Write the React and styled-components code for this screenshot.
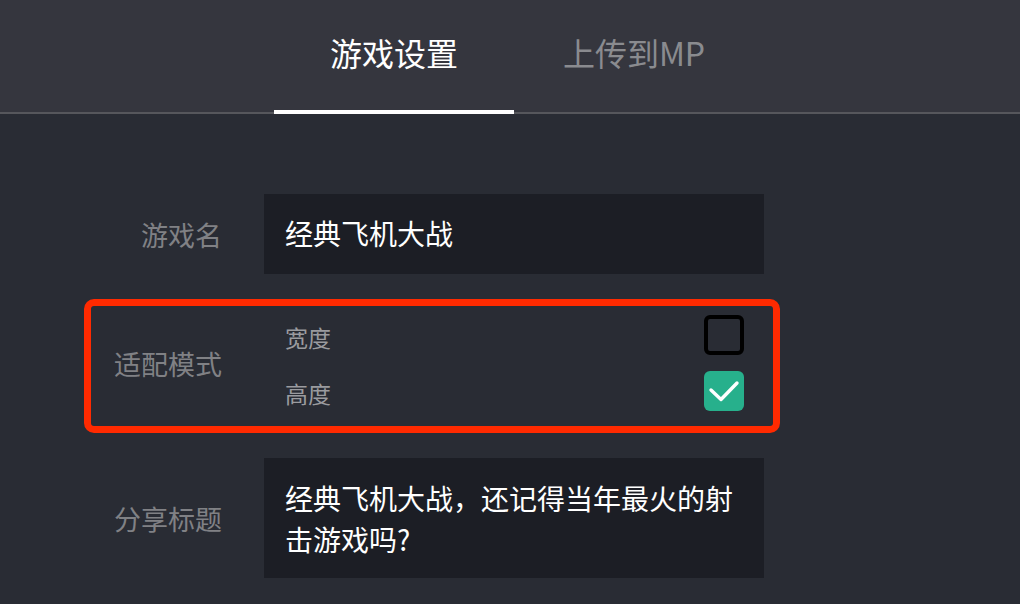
import React, { useState } from "react";
import styled, { createGlobalStyle } from "styled-components";

const GlobalStyle = createGlobalStyle`
  html, body {
    margin: 0;
    padding: 0;
    background: #292c34;
  }
  body {
    font-family: "Noto Sans CJK SC", "Noto Sans", sans-serif;
  }
`;

const Page = styled.div`
  width: 1020px;
  height: 604px;
  overflow: hidden;
  background: #292c34;
`;

const TabBar = styled.div`
  height: 112px;
  display: flex;
  padding-left: 274px;
  background: #35363e;
  border-bottom: 2px solid #56575c;
`;

const Tab = styled.div`
  box-sizing: border-box;
  width: 240px;
  height: 114px;
  padding-bottom: 6px;
  margin-bottom: -2px;
  display: flex;
  align-items: center;
  justify-content: center;
  font-size: 32px;
  color: ${(p) => (p.active ? "#ffffff" : "#8a8b8f")};
  border-bottom: 4px solid ${(p) => (p.active ? "#ffffff" : "transparent")};
  cursor: pointer;
`;

const Form = styled.div`
  display: flex;
  flex-direction: column;
  gap: 18px;
  padding: 73px 0 0 84px;
`;

const Row = styled.div`
  width: 682px;
  display: grid;
  grid-template-columns: 131px 500px;
  column-gap: 42px;
  align-items: center;
  border: 7px solid ${(p) => (p.highlight ? "#ff2a00" : "transparent")};
  border-radius: 10px;
  padding: ${(p) => (p.highlight ? "9px 0 15px" : "0")};
`;

const Label = styled.div`
  text-align: right;
  font-size: 27px;
  color: #808185;
  white-space: nowrap;
`;

const Field = styled.div`
  box-sizing: border-box;
  background: #1c1e25;
  color: #ffffff;
  font-size: 28px;
  line-height: 41px;
  padding: ${(p) => (p.multiline ? "20px 21px 18px" : "19px 21px 20px")};
  min-height: ${(p) => (p.multiline ? "120px" : "80px")};
`;

const Options = styled.div`
  display: flex;
  flex-direction: column;
  gap: 16px;
  padding: 0 20px 0 21px;
`;

const Option = styled.label`
  display: flex;
  align-items: center;
  justify-content: space-between;
  height: 40px;
  font-size: 23px;
  color: #9a9b9f;
  cursor: pointer;
  span {
    padding-top: 3px;
  }
`;

const Box = styled.div`
  box-sizing: border-box;
  width: 40px;
  height: 40px;
  border-radius: 6px;
  border: ${(p) => (p.checked ? "none" : "4px solid #000000")};
  background: ${(p) => (p.checked ? "#27b08c" : "transparent")};
  display: flex;
  align-items: center;
  justify-content: center;
`;

const Check = () => (
  <svg width="40" height="40" viewBox="0 0 40 40">
    <path d="M7 19 L17 28.5 L33 12" fill="none" stroke="#ffffff" strokeWidth="3.4" strokeLinecap="round" strokeLinejoin="round" />
  </svg>
);

const App = () => {
  const [tab, setTab] = useState(0);
  const [mode, setMode] = useState({ width: false, height: true });

  const toggle = (key) => setMode({ ...mode, [key]: !mode[key] });

  return (
    <Page>
      <GlobalStyle />
      <TabBar>
        <Tab active={tab === 0} onClick={() => setTab(0)}>游戏设置</Tab>
        <Tab active={tab === 1} onClick={() => setTab(1)}>上传到MP</Tab>
      </TabBar>
      <Form>
        <Row>
          <Label>游戏名</Label>
          <Field>经典飞机大战</Field>
        </Row>
        <Row highlight>
          <Label>适配模式</Label>
          <Options>
            <Option onClick={() => toggle("width")}>
              <span>宽度</span>
              <Box checked={mode.width}>{mode.width && <Check />}</Box>
            </Option>
            <Option onClick={() => toggle("height")}>
              <span>高度</span>
              <Box checked={mode.height}>{mode.height && <Check />}</Box>
            </Option>
          </Options>
        </Row>
        <Row>
          <Label>分享标题</Label>
          <Field multiline>经典飞机大战，还记得当年最火的射击游戏吗?</Field>
        </Row>
      </Form>
    </Page>
  );
};

export default App;
